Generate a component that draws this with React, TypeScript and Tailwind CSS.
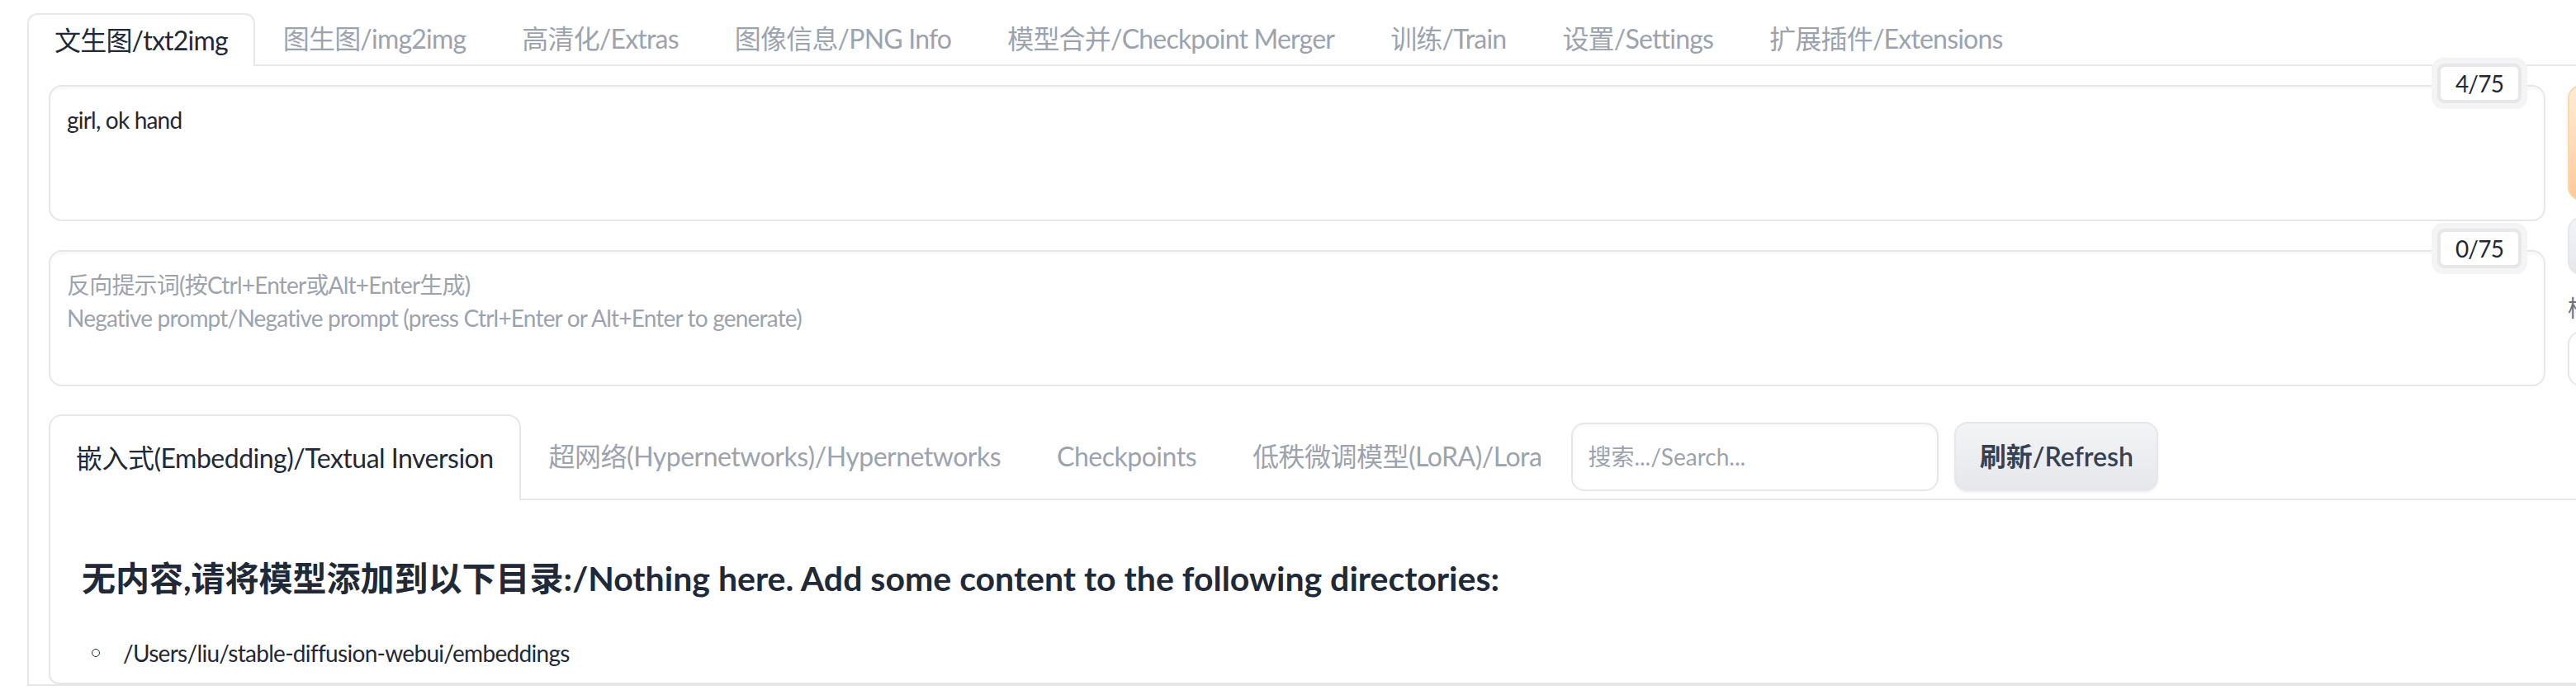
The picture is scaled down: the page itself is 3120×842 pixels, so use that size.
import React from 'react'

const topTabs = [
    '文生图/txt2img',
    '图生图/img2img',
    '高清化/Extras',
    '图像信息/PNG Info',
    '模型合并/Checkpoint Merger',
    '训练/Train',
    '设置/Settings',
    '扩展插件/Extensions',
]

const netTabs = [
    '嵌入式(Embedding)/Textual Inversion',
    '超网络(Hypernetworks)/Hypernetworks',
    'Checkpoints',
    '低秩微调模型(LoRA)/Lora',
]

function Counter({ value }: { value: string }) {
    return (
        <div className="absolute right-[20px] top-[-35px] rounded-[14px] bg-[#f4f4f5] p-[7px]">
            <div className="flex h-[48px] w-[102px] items-center justify-center rounded-[9px] border-[4px] border-[#e5e7eb] bg-white text-[28px] text-[#1f2937]">
                {value}
            </div>
        </div>
    )
}

function PromptBox({ count, children }: { count: string; children: React.ReactNode }) {
    return (
        <div className="relative h-[165px] rounded-[16px] border-2 border-[#e5e7eb] bg-white px-[20px] py-[20px] text-[28px] leading-[40px] tracking-[-0.8px] shadow-[inset_0_2px_4px_rgba(0,0,0,0.04)]">
            {children}
            <Counter value={count} />
        </div>
    )
}

function ExtraNetworks() {
    return (
        <div className="mt-[34px]">
            <div className="flex h-[104px]">
                {netTabs.map((t, i) =>
                    i === 0 ? (
                        <div
                            key={t}
                            className="flex items-center rounded-t-[16px] border-2 border-b-0 border-[#e5e7eb] px-[31px] text-[32px] tracking-[-0.5px] text-[#1f2937]"
                        >
                            {t}
                        </div>
                    ) : (
                        <div
                            key={t}
                            className="flex items-center border-b-2 border-[#e5e7eb] px-[34px] text-[32px] tracking-[-0.5px] text-[#9ca3af]"
                        >
                            {t}
                        </div>
                    )
                )}
                <div className="flex items-center gap-[19px] border-b-2 border-[#e5e7eb] pl-[2px]">
                    <div className="flex h-[83px] w-[445px] items-center rounded-[16px] border-2 border-[#e5e7eb] bg-white px-[18px] text-[28px] text-[#9ca3af] shadow-[inset_0_2px_4px_rgba(0,0,0,0.04)]">
                        搜索.../Search...
                    </div>
                    <button className="flex h-[84px] w-[247px] items-center justify-center rounded-[16px] border-2 border-[#e5e7eb] bg-gradient-to-b from-[#f3f4f6] to-[#e5e7eb] text-[32px] font-semibold text-[#374151] shadow-[0_2px_3px_rgba(0,0,0,0.06)]">
                        刷新/Refresh
                    </button>
                </div>
                <div className="flex-1 border-b-2 border-[#e5e7eb]" />
            </div>
            <div className="h-[223px] rounded-b-[12px] border-x-2 border-b-2 border-[#e5e7eb] pl-[38px] pt-[71px]">
                <h2 className="text-[41px] font-bold leading-[48px] text-[#1f2937]">
                    无内容,请将模型添加到以下目录:/Nothing here. Add some content to the following directories:
                </h2>
                <div className="mt-[46px] flex items-center text-[28px] leading-[40px] tracking-[-0.7px] text-[#1f2937]">
                    <span className="ml-[12px] h-[10px] w-[10px] rounded-full border-[1.5px] border-[#1f2937]" />
                    <span className="ml-[28px]">/Users/liu/stable-diffusion-webui/embeddings</span>
                </div>
            </div>
        </div>
    )
}

export default function App() {
    return (
        <div className="h-[842px] w-[3120px] overflow-hidden bg-white font-['Lato','Noto_Sans_CJK_SC',sans-serif] text-[#1f2937]">
            <div className="w-[3400px] pl-[33px] pt-[16px]">
                <div className="flex h-[64px]">
                    {topTabs.map((t, i) =>
                        i === 0 ? (
                            <div
                                key={t}
                                className="flex items-center rounded-t-[12px] border-2 border-b-0 border-[#e5e7eb] bg-white px-[31px] text-[32px] tracking-[-0.8px] text-[#1f2937]"
                            >
                                {t}
                            </div>
                        ) : (
                            <div
                                key={t}
                                className="flex items-center border-b-2 border-[#e5e7eb] px-[34px] text-[32px] tracking-[-0.8px] text-[#9ca3af]"
                            >
                                {t}
                            </div>
                        )
                    )}
                    <div className="flex-1 border-b-2 border-[#e5e7eb]" />
                </div>

                <div className="border-x-2 border-b-2 border-[#e5e7eb] pl-[24px] pt-[23px]">
                    <div className="flex gap-[27px]">
                        <div className="flex w-[3024px] shrink-0 flex-col gap-[35px]">
                            <PromptBox count="4/75">
                                <div className="text-[#1f2937]">girl, ok hand</div>
                            </PromptBox>
                            <PromptBox count="0/75">
                                <div className="text-[#9ca3af]">反向提示词(按Ctrl+Enter或Alt+Enter生成)</div>
                                <div className="text-[#9ca3af]">
                                    Negative prompt/Negative prompt (press Ctrl+Enter or Alt+Enter to generate)
                                </div>
                            </PromptBox>
                        </div>
                        <div className="flex w-[300px] shrink-0 flex-col">
                            <button className="h-[140px] rounded-[16px] border-2 border-[#fed7aa] bg-gradient-to-b from-[#ffedd5] to-[#fdc998]" />
                            <button className="mt-[20px] h-[70px] rounded-[16px] border-2 border-[#e5e7eb] bg-gradient-to-b from-[#f3f4f6] to-[#e5e7eb]" />
                            <div className="mt-[22px] text-[28px] leading-[36px] text-[#6b7280]">样式/Styles</div>
                            <div className="mt-[10px] h-[67px] rounded-[16px] border-2 border-[#e5e7eb] bg-white" />
                        </div>
                    </div>

                    <ExtraNetworks />
                </div>
            </div>
        </div>
    )
}
